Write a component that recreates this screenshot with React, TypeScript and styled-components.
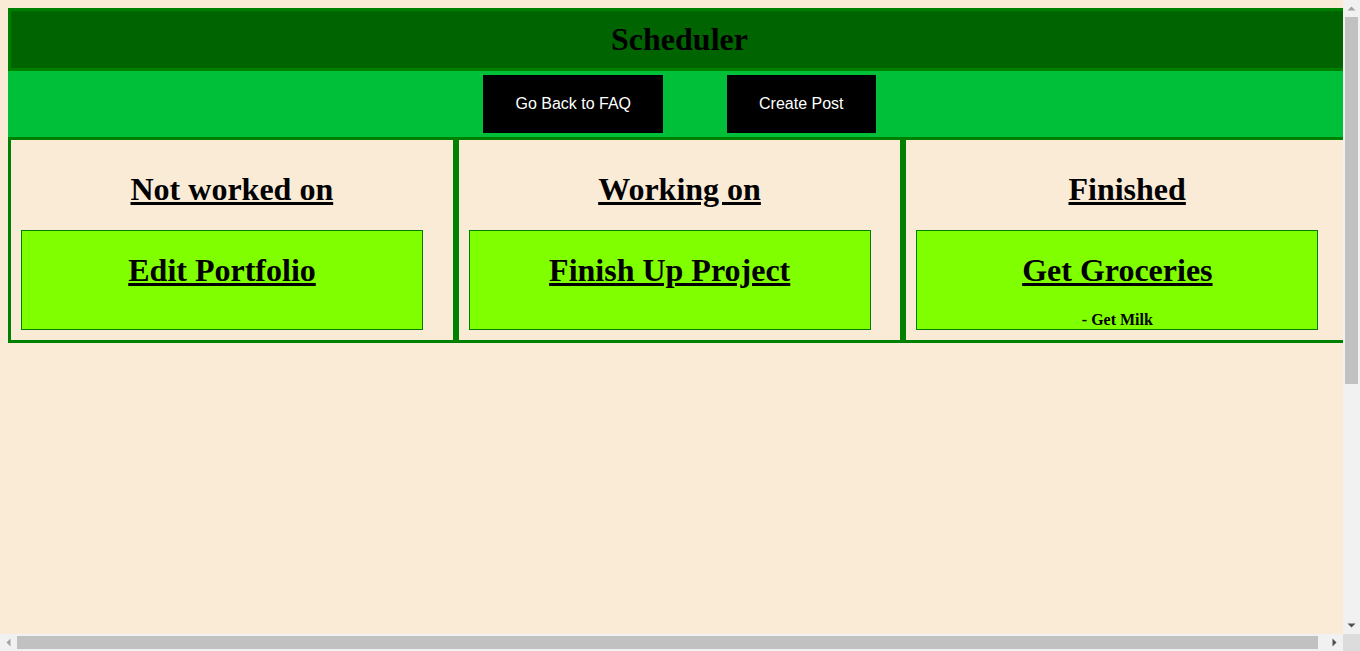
import React from "react";
import styled, { createGlobalStyle } from "styled-components";

const GlobalStyle = createGlobalStyle`
  html {
    background: #faebd7;
  }
  body {
    margin: 8px;
    width: calc(100% - 17px);
    background: #faebd7;
    font-family: "Liberation Serif", "Times New Roman", serif;
    color: #000;
  }
`;

const Page = styled.div`
  min-height: 1020px;
`;

const Header = styled.header`
  background: #006400;
  border: 3px solid #008000;
  padding: 10px;
  text-align: center;
`;

const Title = styled.h1`
  margin: 0;
  font-size: 32px;
  font-weight: bold;
`;

const Nav = styled.nav`
  background: #00c03a;
  display: flex;
  justify-content: center;
  gap: 64px;
  padding: 4px;
`;

const NavButton = styled.button`
  background: #000;
  color: #fff;
  border: none;
  padding: 20px 32px;
  font-family: "Liberation Sans", Arial, sans-serif;
  font-size: 16px;
  line-height: normal;
  cursor: pointer;
`;

const Board = styled.main`
  display: flex;
`;

const Column = styled.section`
  flex: 1 1 0;
  min-width: 0;
  border: 3px solid #008000;
  padding: 10px;
`;

const ColumnTitle = styled.h1`
  margin: 0.67em 0;
  font-size: 32px;
  font-weight: bold;
  text-align: center;
  text-decoration: underline;
`;

const Card = styled.div`
  width: 400px;
  height: 98px;
  border: 1px solid #008000;
  background: #7fff00;
  text-align: center;
`;

const CardTitle = styled.h1`
  margin: 0.67em 0;
  font-size: 32px;
  font-weight: bold;
  text-decoration: underline;
`;

const CardItem = styled.h4`
  margin: 1.33em 0;
  font-size: 16px;
  font-weight: bold;
`;

/* Browser scrollbars, drawn over the page (the capture hides native ones) */
const VScroll = styled.div`
  position: fixed;
  top: 0;
  right: 0;
  bottom: 17px;
  width: 17px;
  background: #f1f1f1;
  display: flex;
  flex-direction: column;
`;

const HScroll = styled.div`
  position: fixed;
  left: 0;
  right: 17px;
  bottom: 0;
  height: 17px;
  background: #f1f1f1;
  display: flex;
`;

const Corner = styled.div`
  position: fixed;
  right: 0;
  bottom: 0;
  width: 17px;
  height: 17px;
  background: #dcdcdc;
`;

const ArrowBox = styled.div`
  flex: 0 0 17px;
  width: 17px;
  height: 17px;
  display: flex;
`;

const VTrack = styled.div`
  flex: 1;
  padding: 0 2px;
`;

const HTrack = styled.div`
  flex: 1;
  padding: 2px 0;
`;

const VThumb = styled.div`
  height: 367px;
  background: #c1c1c1;
`;

const HThumb = styled.div`
  width: 1301px;
  height: 100%;
  background: #c1c1c1;
`;

const Arrow = ({ points, color }: { points: string; color: string }) => (
  <ArrowBox>
    <svg width="17" height="17" viewBox="0 0 17 17">
      <polygon points={points} fill={color} />
    </svg>
  </ArrowBox>
);

type Task = { title: string; items: string[] };

const columns: { name: string; tasks: Task[] }[] = [
  { name: "Not worked on", tasks: [{ title: "Edit Portfolio", items: [] }] },
  { name: "Working on", tasks: [{ title: "Finish Up Project", items: [] }] },
  { name: "Finished", tasks: [{ title: "Get Groceries", items: ["Get Milk"] }] },
];

export default function App() {
  return (
    <Page>
      <GlobalStyle />
      <Header>
        <Title>Scheduler</Title>
      </Header>
      <Nav>
        <NavButton>Go Back to FAQ</NavButton>
        <NavButton>Create Post</NavButton>
      </Nav>
      <Board>
        {columns.map((col) => (
          <Column key={col.name}>
            <ColumnTitle>{col.name}</ColumnTitle>
            {col.tasks.map((t) => (
              <Card key={t.title}>
                <CardTitle>{t.title}</CardTitle>
                {t.items.map((it) => (
                  <CardItem key={it}>- {it}</CardItem>
                ))}
              </Card>
            ))}
          </Column>
        ))}
      </Board>
      <VScroll>
        <Arrow points="4.5,10.5 12.5,10.5 8.5,6.5" color="#a3a3a3" />
        <VTrack>
          <VThumb />
        </VTrack>
        <Arrow points="4.5,6.5 12.5,6.5 8.5,10.5" color="#505050" />
      </VScroll>
      <HScroll>
        <Arrow points="10.5,4.5 10.5,12.5 6.5,8.5" color="#a3a3a3" />
        <HTrack>
          <HThumb />
        </HTrack>
        <Arrow points="6.5,4.5 6.5,12.5 10.5,8.5" color="#505050" />
      </HScroll>
      <Corner />
    </Page>
  );
}
